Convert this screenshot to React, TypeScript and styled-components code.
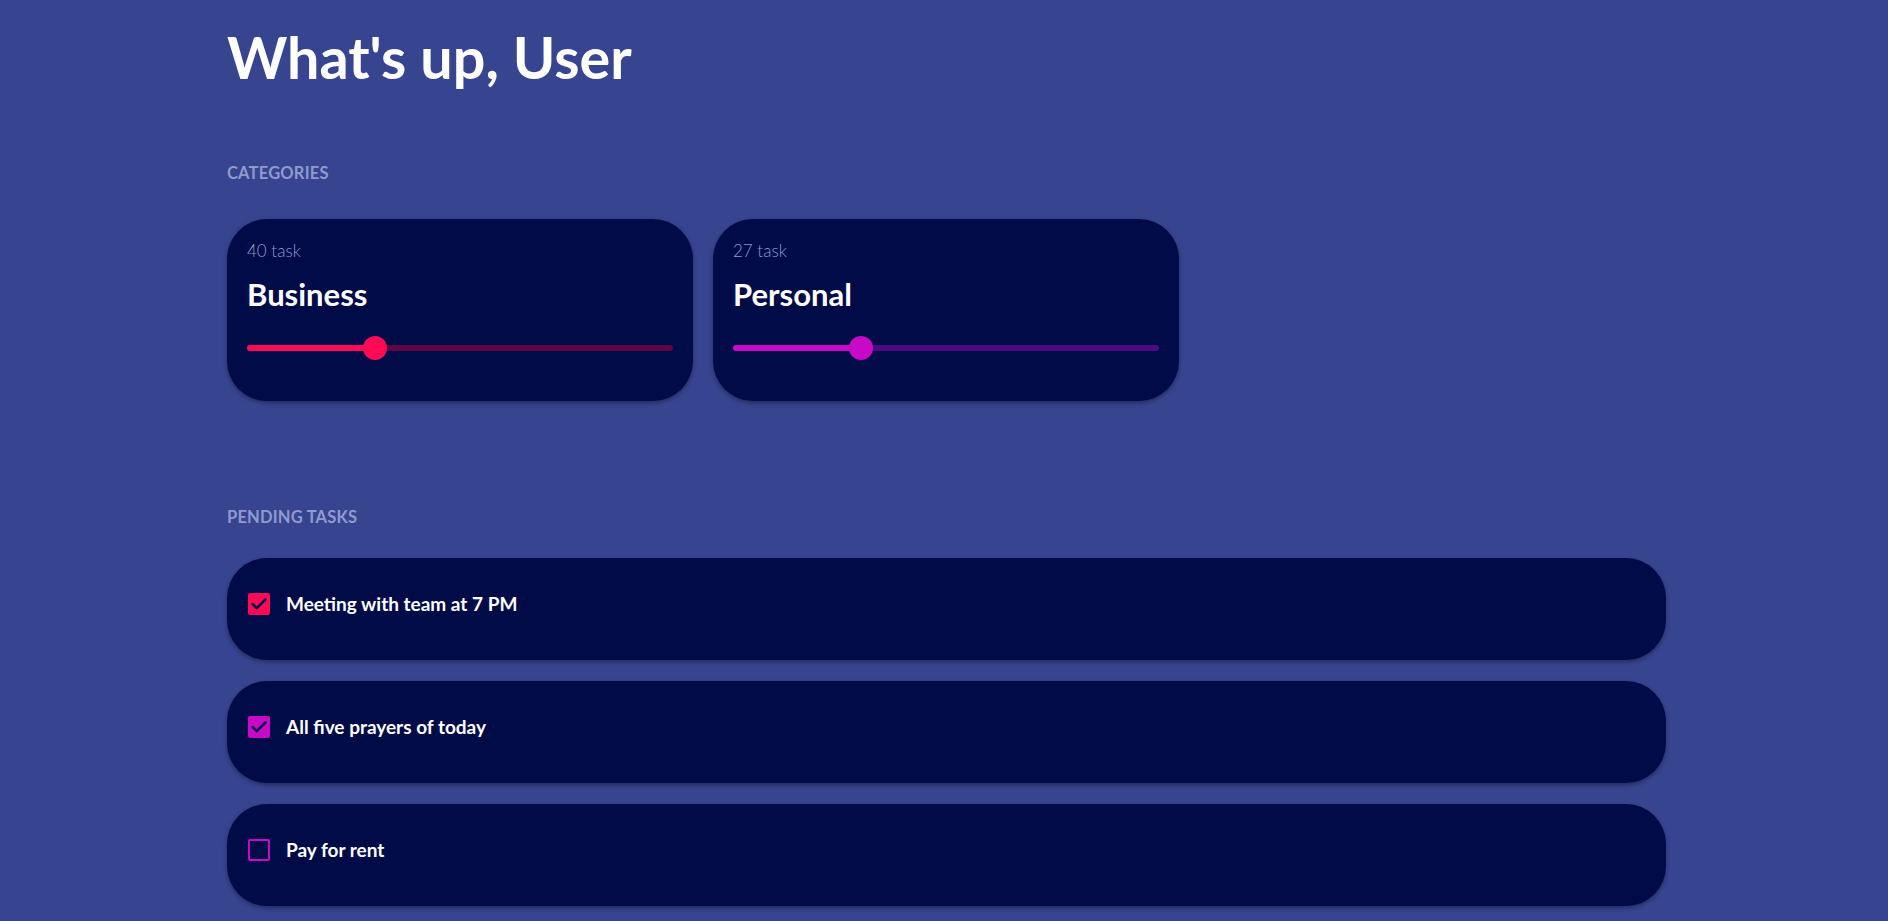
import React from "react";
import styled, { createGlobalStyle } from "styled-components";

const GlobalStyle = createGlobalStyle`
  html, body {
    margin: 0;
    padding: 0;
    background: #37448f;
  }
  body {
    font-family: "Lato", "Noto Sans", sans-serif;
    color: #ffffff;
  }
`;

const Page = styled.main`
  max-width: 1444px;
  margin: 0 auto;
  padding: 20px 0 0 5px;
  box-sizing: border-box;
`;

const Title = styled.h1`
  margin: 0;
  font-size: 57.5px;
  line-height: 74px;
  font-weight: 700;
  color: #ffffff;
`;

const SectionLabel = styled.h2<{ $top: number }>`
  margin: ${(p) => p.$top}px 0 0;
  font-size: 16.5px;
  line-height: 20px;
  font-weight: 700;
  letter-spacing: 0.2px;
  color: #8f9bd0;
  text-transform: uppercase;
`;

const CardRow = styled.div`
  display: flex;
  gap: 20px;
  margin-top: 36px;
`;

const Card = styled.div`
  width: 466px;
  height: 182px;
  box-sizing: border-box;
  padding: 22px 20px 0 20px;
  background: #000b48;
  border-radius: 40px;
  box-shadow: 0 2px 4px rgba(0, 0, 0, 0.35);
`;

const TaskCount = styled.div`
  font-size: 17px;
  line-height: 20px;
  font-weight: 300;
  color: #8f9bd0;
`;

const CardTitle = styled.div`
  margin-top: 15px;
  font-size: 31px;
  line-height: 36px;
  font-weight: 700;
  color: #ffffff;
`;

const Slider = styled.div`
  position: relative;
  margin-top: 24px;
  height: 24px;
  display: flex;
  align-items: center;
`;

const Track = styled.div<{ $rest: string }>`
  position: relative;
  width: 100%;
  height: 6px;
  border-radius: 3px;
  background: ${(p) => p.$rest};
`;

const Fill = styled.div<{ $color: string }>`
  position: absolute;
  left: 0;
  top: 0;
  bottom: 0;
  border-radius: 3px;
  background: ${(p) => p.$color};
`;

const Thumb = styled.div<{ $color: string }>`
  position: absolute;
  top: 50%;
  width: 24px;
  height: 24px;
  border-radius: 50%;
  background: ${(p) => p.$color};
  transform: translate(-50%, -50%);
`;

const TaskList = styled.div`
  display: flex;
  flex-direction: column;
  gap: 21px;
  margin-top: 31px;
  padding-bottom: 20px;
`;

const TaskRow = styled.div`
  height: 102px;
  box-sizing: border-box;
  display: flex;
  align-items: flex-start;
  gap: 16px;
  padding: 35px 20px 0 21px;
  background: #000b48;
  border-radius: 40px;
  box-shadow: 0 2px 4px rgba(0, 0, 0, 0.35);
`;

const Check = styled.div<{ $color: string; $checked: boolean }>`
  width: 22px;
  height: 22px;
  flex: none;
  box-sizing: border-box;
  border-radius: 2px;
  border: 2px solid ${(p) => p.$color};
  background: ${(p) => (p.$checked ? p.$color : "transparent")};
  display: flex;
  align-items: center;
  justify-content: center;
`;

const TaskText = styled.span`
  font-size: 19px;
  line-height: 22px;
  font-weight: 700;
  color: #ffffff;
`;

const categories = [
  { count: 40, name: "Business", value: 30, color: "#ff0a54", rest: "#5e0745" },
  { count: 27, name: "Personal", value: 30, color: "#c80ac8", rest: "#4a0a80" },
];

const tasks = [
  { text: "Meeting with team at 7 PM", color: "#ff0a54", checked: true },
  { text: "All five prayers of today", color: "#c80ac8", checked: true },
  { text: "Pay for rent", color: "#c80ac8", checked: false },
];

const CheckMark = () => (
  <svg width="18" height="18" viewBox="0 0 24 24" fill="none">
    <path d="M3.5 12l5.5 5.5L20.5 6" stroke="#000b48" strokeWidth="3.4" strokeLinecap="round" strokeLinejoin="round" />
  </svg>
);

export default function App() {
  return (
    <>
      <GlobalStyle />
      <Page>
        <Title>What's up, User</Title>
        <SectionLabel $top={69}>Categories</SectionLabel>
        <CardRow>
          {categories.map((c) => (
            <Card key={c.name}>
              <TaskCount>{c.count} task</TaskCount>
              <CardTitle>{c.name}</CardTitle>
              <Slider>
                <Track $rest={c.rest}>
                  <Fill $color={c.color} style={{ width: `${c.value}%` }} />
                  <Thumb $color={c.color} style={{ left: `${c.value}%` }} />
                </Track>
              </Slider>
            </Card>
          ))}
        </CardRow>
        <SectionLabel $top={106}>Pending tasks</SectionLabel>
        <TaskList>
          {tasks.map((t) => (
            <TaskRow key={t.text}>
              <Check $color={t.color} $checked={t.checked}>
                {t.checked && <CheckMark />}
              </Check>
              <TaskText>{t.text}</TaskText>
            </TaskRow>
          ))}
        </TaskList>
      </Page>
    </>
  );
}
